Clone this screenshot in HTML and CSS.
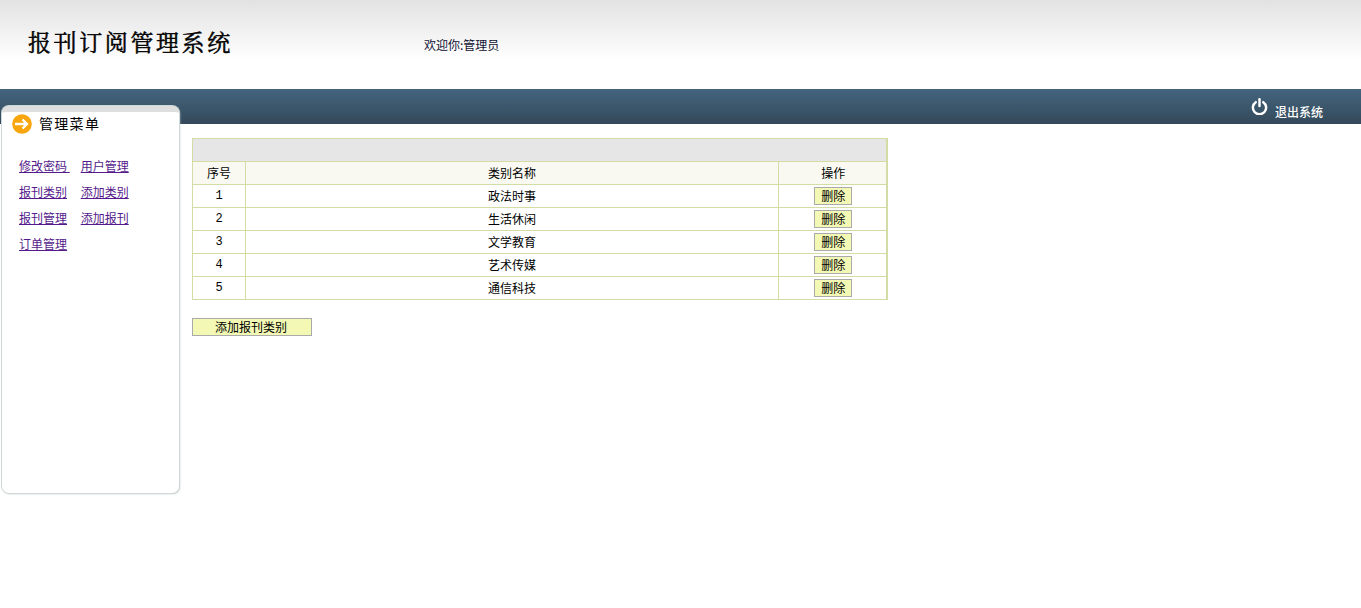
FILE: index.html
```html
<!DOCTYPE html>
<html lang="zh-CN">
<head>
<meta charset="utf-8">
<title>报刊订阅管理系统</title>
<link rel="stylesheet" href="styles.css">
</head>
<body>
<header class="top">
  <h1 class="brand">报刊订阅管理系统</h1>
  <div class="welcome">欢迎你:管理员</div>
</header>
<div class="bar">
  <a class="logout" href="#">
    <svg class="power" viewBox="0 0 18 18" width="17" height="17" aria-hidden="true">
      <path d="M5 4.4a7 7 0 1 0 8 0" fill="none" stroke="#fff" stroke-width="2.6" stroke-linecap="round"/>
      <path d="M9 1.4v7" fill="none" stroke="#fff" stroke-width="2.6" stroke-linecap="round"/>
    </svg>
    <span>退出系统</span>
  </a>
</div>
<div class="body">
  <aside class="side">
    <div class="side-head">
      <svg class="arrow" viewBox="0 0 20 20" width="20" height="20" aria-hidden="true">
        <circle cx="10" cy="10" r="9.8" fill="#f9a50c"/>
        <path d="M3 10h12M10.5 5.5l4.5 4.5-4.5 4.5" fill="none" stroke="#fff" stroke-width="2.4"/>
      </svg>
      <span class="side-title">管理菜单</span>
    </div>
    <nav class="menu">
      <a href="#">修改密码&nbsp;</a><a href="#">用户管理</a>
      <a href="#">报刊类别</a><a href="#">添加类别</a>
      <a href="#">报刊管理</a><a href="#">添加报刊</a>
      <a href="#">订单管理</a>
    </nav>
  </aside>
  <main class="main">
    <table class="grid">
      <colgroup><col class="c-no"><col class="c-name"><col class="c-op"></colgroup>
      <thead>
        <tr class="caption-row"><th colspan="3"></th></tr>
        <tr class="head-row"><th>序号</th><th>类别名称</th><th class="op">操作</th></tr>
      </thead>
      <tbody>
        <tr><td class="num">1</td><td>政法时事</td><td class="op"><button class="btn">删除</button></td></tr>
        <tr><td class="num">2</td><td>生活休闲</td><td class="op"><button class="btn">删除</button></td></tr>
        <tr><td class="num">3</td><td>文学教育</td><td class="op"><button class="btn">删除</button></td></tr>
        <tr><td class="num">4</td><td>艺术传媒</td><td class="op"><button class="btn">删除</button></td></tr>
        <tr><td class="num">5</td><td>通信科技</td><td class="op"><button class="btn">删除</button></td></tr>
      </tbody>
    </table>
    <button class="btn btn-add">添加报刊类别</button>
  </main>
</div>
</body>
</html>
```
FILE: styles.css
```css
* { box-sizing: border-box; }
html, body { margin: 0; padding: 0; }
body {
  background: #fff;
  color: #000;
  font-family: "Noto Sans CJK SC", "Liberation Sans", sans-serif;
  font-size: 12px;
  height: 608px;
  overflow: hidden;
}
.top {
  height: 89px;
  display: flex;
  background: linear-gradient(to bottom, #e2e2e2 0, #fff 60px);
}
.brand {
  margin: 25px 0 0 28px;
  width: 396px;
  font-size: 23px;
  line-height: 34px;
  font-weight: 400;
  letter-spacing: 2.6px;
  font-family: "Noto Serif CJK SC", "Noto Sans CJK SC", "Liberation Serif", serif;
  -webkit-text-stroke: 0.5px #000;
}
.welcome { margin-top: 36px; line-height: 18px; color: #111133; }
.bar {
  height: 35px;
  display: flex;
  justify-content: flex-end;
  background: linear-gradient(to bottom, #43657e 0, #34495a 100%);
}
.logout {
  display: flex;
  margin: 9px 38px 0 0;
  height: 20px;
  color: #fff;
  text-decoration: none;
  font-weight: 500;
}
.logout span { margin: 6px 0 0 7px; line-height: 16px; }
.power { display: block; }
.body { display: flex; align-items: flex-start; }
.side {
  width: 177px;
  height: 387px;
  margin: -18px 0 0 2px;
  background: #fff;
  border-radius: 7px;
  border-top: 6px solid #dedede;
  box-shadow: 0 0 0 1px #cfd8d8, 1px 1px 2px #bfcaca;
  position: relative;
}
.side-head {
  display: flex;
  align-items: center;
  gap: 7px;
  margin: 3px 0 0 10px;
  height: 18px;
  font-size: 14px;
  letter-spacing: 1.3px;
}
.side-title { margin-top: -2px; }
.menu {
  display: grid;
  grid-template-columns: max-content max-content;
  justify-content: start;
  column-gap: 11px;
  row-gap: 10px;
  margin: 25px 0 0 17px;
}
.menu a { color: #551a8b; line-height: 16px; }
.main { margin: 14px 0 0 13px; width: 696px; }
.grid {
  width: 694px;
  border-collapse: collapse;
  table-layout: fixed;
  border: 1px solid #d2dca4;
  border-right-width: 2px;
}
.c-no { width: 53px; }
.c-name { width: 533px; }
.c-op { width: 108px; }
.grid th, .grid td {
  border: 1px solid #d2dca4;
  padding: 0 0 1px;
  text-align: center;
  font-weight: 400;
  height: 23px;
}
.grid .op { padding-left: 2px; }
.grid .num { font-family: "Liberation Mono", monospace; font-size: 12px; }
.caption-row th { height: 23px; background: #e6e6e6; }
.head-row th { background: #f9f9f1; }
.btn {
  display: block;
  margin: 0 auto;
  width: 38px;
  height: 18px;
  padding: 0;
  border: 1px solid #aaa;
  background: #f3f9b4;
  color: #000;
  font: inherit;
  line-height: 16px;
}
.btn-add {
  width: 120px;
  margin: 18px 0 0;
  padding-right: 2px;
}
```
